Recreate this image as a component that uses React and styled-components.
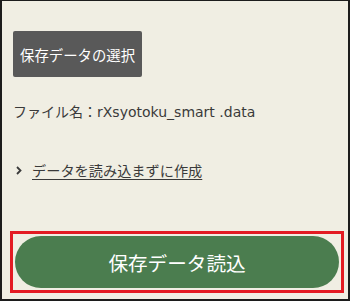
import React from 'react';
import styled, { createGlobalStyle } from 'styled-components';

const GlobalStyle = createGlobalStyle`
  html, body {
    margin: 0;
    padding: 0;
  }
  body {
    font-family: "Noto Sans CJK JP", "Noto Sans", sans-serif;
  }
`;

const Frame = styled.div`
  box-sizing: border-box;
  width: 350px;
  height: 301px;
  border: 2px solid #1c1c1c;
  border-top-width: 1px;
  background: #f0eee3;
  padding: 30px 11px 0;
  display: flex;
  flex-direction: column;
  align-items: flex-start;
  color: #3a3a3a;
`;

const SelectButton = styled.button`
  height: 46px;
  padding: 0 7px;
  border: none;
  border-radius: 2px;
  background: #595959;
  color: #fff;
  font-family: inherit;
  font-size: 14.4px;
  cursor: pointer;
`;

const FileName = styled.p`
  margin: 25px 0 0;
  font-family: "DejaVu Sans", "Noto Sans CJK JP", sans-serif;
  font-size: 14px;
  line-height: 20px;
`;

const LinkRow = styled.a`
  display: flex;
  align-items: center;
  gap: 10px;
  margin-top: 38px;
  padding-left: 3px;
  font-size: 14.2px;
  line-height: 20px;
  color: #3a3a3a;
  cursor: pointer;

  span {
    text-decoration: underline;
    text-underline-offset: 3px;
  }
`;

const Highlight = styled.div`
  align-self: stretch;
  margin: 51px -7px 0 -3px;
  border: 3px solid #e31b23;
  padding: 2px;
`;

const LoadButton = styled.button`
  display: block;
  width: 100%;
  height: 52px;
  border: none;
  border-radius: 26px;
  background: #4b7d4f;
  color: #fff;
  font-family: inherit;
  font-size: 19.6px;
  cursor: pointer;
`;

const Chevron = () => (
  <svg width="6" height="9" viewBox="0 0 6 9">
    <path d="M1 1l3.5 3.5L1 8" fill="none" stroke="#3a3a3a" strokeWidth="1.8" />
  </svg>
);

export default function App() {
  return (
    <>
      <GlobalStyle />
      <Frame>
        <SelectButton>保存データの選択</SelectButton>
        <FileName>ファイル名：rXsyotoku_smart .data</FileName>
        <LinkRow>
          <Chevron />
          <span>データを読み込まずに作成</span>
        </LinkRow>
        <Highlight>
          <LoadButton>保存データ読込</LoadButton>
        </Highlight>
      </Frame>
    </>
  );
}
